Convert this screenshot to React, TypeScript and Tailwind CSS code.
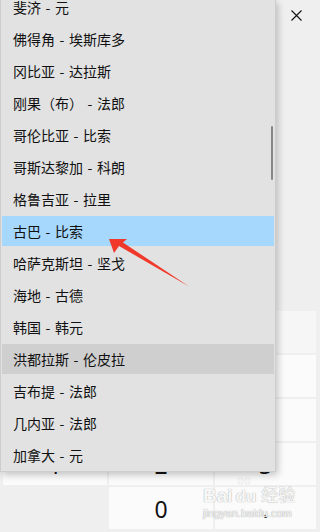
import React from "react";

const items: [string, string][] = [
  ["斐济", "元"],
  ["佛得角", "埃斯库多"],
  ["冈比亚", "达拉斯"],
  ["刚果（布）", "法郎"],
  ["哥伦比亚", "比索"],
  ["哥斯达黎加", "科朗"],
  ["格鲁吉亚", "拉里"],
  ["古巴", "比索"],
  ["哈萨克斯坦", "坚戈"],
  ["海地", "古德"],
  ["韩国", "韩元"],
  ["洪都拉斯", "伦皮拉"],
  ["吉布提", "法郎"],
  ["几内亚", "法郎"],
  ["加拿大", "元"],
];

const rows: { label: string; kind: "op" | "num" | "none" }[][] = [
  [
    { label: "", kind: "op" },
    { label: "CE", kind: "op" },
    { label: "⌫", kind: "op" },
  ],
  [
    { label: "7", kind: "num" },
    { label: "8", kind: "num" },
    { label: "9", kind: "num" },
  ],
  [
    { label: "4", kind: "num" },
    { label: "5", kind: "num" },
    { label: "6", kind: "num" },
  ],
  [
    { label: "1", kind: "num" },
    { label: "2", kind: "num" },
    { label: "3", kind: "num" },
  ],
  [
    { label: "", kind: "none" },
    { label: "0", kind: "num" },
    { label: ".", kind: "num" },
  ],
];

export default function App() {
  return (
    <div className="relative w-[320px] h-[532px] overflow-hidden bg-[#efefef] font-['Noto_Sans','Noto_Sans_CJK_SC',sans-serif]">
      {/* base calculator page */}
      <div className="flex flex-col h-full">
        <div className="flex justify-end h-[30px] pt-[10px] pr-[18px]">
          <svg width="11" height="11" viewBox="0 0 11 11" className="block">
            <path d="M0.5 0.5 L10.5 10.5 M10.5 0.5 L0.5 10.5" stroke="#111" strokeWidth="1.1" fill="none" />
          </svg>
        </div>
        <div className="flex-1" />
        <div className="grid grid-cols-[104px_104px_1fr] auto-rows-[42px] gap-[2px] pl-[3px] pr-[4px] pb-[3px]">
          {rows.flat().map((c, i) => (
            <div
              key={i}
              className={
                c.kind === "none"
                  ? ""
                  : c.kind === "op"
                  ? "flex items-center justify-center bg-[#f6f6f6] text-[#111] text-[15px]"
                  : "flex items-center justify-center bg-[#fbfbfb] text-[#111] text-[23px] pt-[2px]"
              }
            >
              {c.label}
            </div>
          ))}
        </div>
      </div>

      {/* watermark */}
      <div className="absolute left-[203px] top-[485px] flex flex-col pointer-events-none">
        <div className="flex items-end gap-[1px] text-[#f7f7f7] [text-shadow:0_0_1px_#b8b8b8,0_0_1px_#b8b8b8] font-['Liberation_Sans','Noto_Sans_CJK_SC',sans-serif]">
          <span className="text-[19px] font-bold leading-[22px]">Bai</span>
          <span className="relative text-[17px] font-bold leading-[20px] px-[2px]">
            du
            <span className="absolute -top-[9px] left-[4px] flex gap-[2px]">
              <span className="w-[5px] h-[6px] rounded-full bg-[#f7f7f7] shadow-[0_0_1px_#b8b8b8]" />
              <span className="w-[5px] h-[6px] rounded-full bg-[#f7f7f7] shadow-[0_0_1px_#b8b8b8]" />
            </span>
          </span>
          <span className="text-[17px] leading-[22px] ml-[2px]">经验</span>
        </div>
        <span className="text-[11px] leading-[12px] text-[#f5f5f5] [text-shadow:0_0_1px_#b0b0b0,0_0_1px_#b0b0b0] font-['Liberation_Sans',sans-serif]">
          jingyan.baidu.com
        </span>
      </div>

      {/* dropdown menu overlay */}
      <div className="absolute left-0 top-0 w-[276px] h-[472px] overflow-hidden bg-[#e2e2e2] border-x border-b border-[#cdcdcd] shadow-[2px_3px_7px_rgba(0,0,0,0.22)] font-['Noto_Sans_CJK_SC',sans-serif]">
        <div className="-mt-[9px] flex flex-col">
          {items.map(([a, b], i) => (
            <div key={i} className="h-[32px] py-[1px] px-px">
              <div
                className={
                  "h-[30px] flex items-center pl-[11px] text-[14px] text-[#111] whitespace-nowrap " +
                  (i === 7 ? "bg-[#a6d7fd]" : i === 11 ? "bg-[#cfcfcf]" : "")
                }
              >
                <span>{a}</span>
                <span className="inline-block w-[14px] text-center">-</span>
                <span>{b}</span>
              </div>
            </div>
          ))}
        </div>
        <div className="absolute left-[270px] top-[126px] w-[2px] h-[54px] bg-[#868686] rounded-full" />
      </div>

      {/* red annotation arrow */}
      <svg className="absolute left-0 top-0 pointer-events-none" width="320" height="532" viewBox="0 0 320 532">
        <polygon points="109,239 127,239 123,242.5 189,286.5 119,246 114,253" fill="#f0392a" />
      </svg>
    </div>
  );
}
